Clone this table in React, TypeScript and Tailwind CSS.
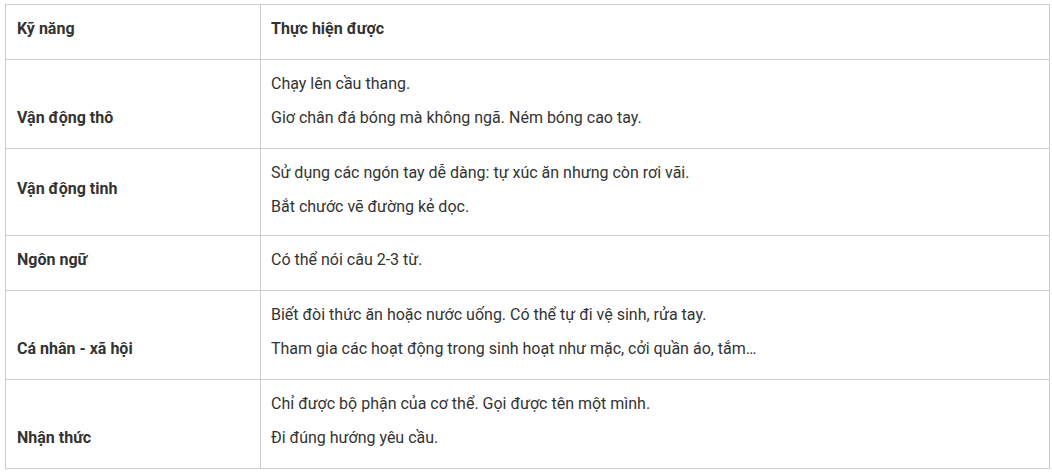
const rows: { skill: string; lines: string[]; align: 'middle' | 'bottom'; tight?: boolean }[] = [
  {
    skill: 'Vận động thô',
    lines: ['Chạy lên cầu thang.', 'Giơ chân đá bóng mà không ngã. Ném bóng cao tay.'],
    align: 'bottom',
  },
  {
    skill: 'Vận động tinh',
    lines: ['Sử dụng các ngón tay dễ dàng: tự xúc ăn nhưng còn rơi vãi.', 'Bắt chước vẽ đường kẻ dọc.'],
    align: 'middle',
    tight: true,
  },
  {
    skill: 'Ngôn ngữ',
    lines: ['Có thể nói câu 2-3 từ.'],
    align: 'middle',
  },
  {
    skill: 'Cá nhân - xã hội',
    lines: [
      'Biết đòi thức ăn hoặc nước uống. Có thể tự đi vệ sinh, rửa tay.',
      'Tham gia các hoạt động trong sinh hoạt như mặc, cởi quần áo, tắm…',
    ],
    align: 'bottom',
  },
  {
    skill: 'Nhận thức',
    lines: ['Chỉ được bộ phận của cơ thể. Gọi được tên một mình.', 'Đi đúng hướng yêu cầu.'],
    align: 'bottom',
  },
]

export default function App() {
  return (
    <div className="bg-white pt-[4px] pl-[5px] pr-[3px] font-['Roboto',sans-serif] text-[16px] text-[#333]">
      <table className="w-[1045px] border-collapse table-fixed">
        <colgroup>
          <col className="w-[255px]" />
          <col />
        </colgroup>
        <thead>
          <tr>
            <th className="border border-[#cccccc] px-[11px] pt-[12px] pb-[8px] text-left align-middle font-bold">
              <p className="mb-[10px] leading-[24px]">Kỹ năng</p>
            </th>
            <th className="border border-[#cccccc] px-[10px] pt-[12px] pb-[8px] text-left align-middle font-bold">
              <p className="mb-[10px] leading-[24px]">Thực hiện được</p>
            </th>
          </tr>
        </thead>
        <tbody>
          {rows.map((row) => (
            <tr key={row.skill}>
              <td
                className={
                  'border border-[#cccccc] px-[11px] pt-[12px] pb-[8px] font-bold ' +
                  (row.align === 'bottom' ? 'align-bottom' : 'align-middle')
                }
              >
                <p className="mb-[10px] leading-[24px]">{row.skill}</p>
              </td>
              <td
                className={
                  'border border-[#cccccc] px-[10px] pt-[12px] align-middle ' +
                  (row.tight ? 'pb-[6px]' : 'pb-[8px]')
                }
              >
                {row.lines.map((line) => (
                  <p key={line} className="mb-[10px] leading-[24px]">
                    {line}
                  </p>
                ))}
              </td>
            </tr>
          ))}
        </tbody>
      </table>
    </div>
  )
}
